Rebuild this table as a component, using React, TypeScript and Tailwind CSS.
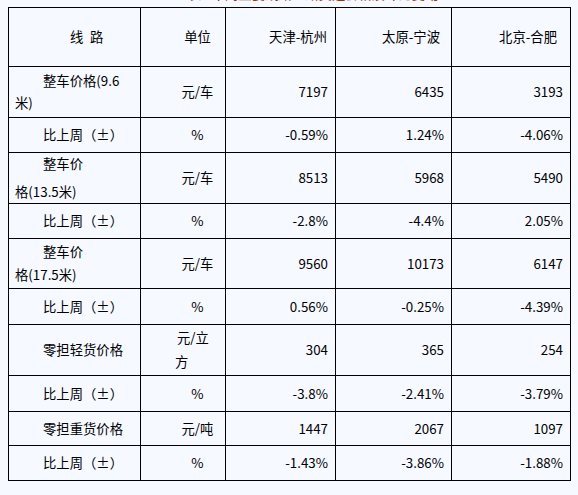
type Row = {
  label: string[];
  labelGap?: string;
  unit: string[];
  vals: string[];
  h: string;
};

const rows: Row[] = [
  { label: ["整车价格(9.6", "米)"], labelGap: "gap-[8px]", unit: ["元/车"], vals: ["7197", "6435", "3193"], h: "h-[51px]" },
  { label: ["比上周（±）"], unit: ["%"], vals: ["-0.59%", "1.24%", "-4.06%"], h: "h-[35px]" },
  { label: ["整车价", "格(13.5米)"], labelGap: "gap-[14px]", unit: ["元/车"], vals: ["8513", "5968", "5490"], h: "h-[51px]" },
  { label: ["比上周（±）"], unit: ["%"], vals: ["-2.8%", "-4.4%", "2.05%"], h: "h-[35px]" },
  { label: ["整车价", "格(17.5米)"], labelGap: "gap-[9px]", unit: ["元/车"], vals: ["9560", "10173", "6147"], h: "h-[50px]" },
  { label: ["比上周（±）"], unit: ["%"], vals: ["0.56%", "-0.25%", "-4.39%"], h: "h-[36px]" },
  { label: ["零担轻货价格"], unit: ["元/立", "方"], vals: ["304", "365", "254"], h: "h-[51px]" },
  { label: ["比上周（±）"], unit: ["%"], vals: ["-3.8%", "-2.41%", "-3.79%"], h: "h-[36px]" },
  { label: ["零担重货价格"], unit: ["元/吨"], vals: ["1447", "2067", "1097"], h: "h-[34px]" },
  { label: ["比上周（±）"], unit: ["%"], vals: ["-1.43%", "-3.86%", "-1.88%"], h: "h-[35px]" },
];

const cell = "border border-black align-middle p-0";

function Label({ lines, gap }: { lines: string[]; gap?: string }) {
  if (lines.length === 1) {
    return <div className="pl-[34px] leading-[14px] whitespace-nowrap">{lines[0]}</div>;
  }
  return (
    <div className={`flex flex-col ${gap ?? ""}`}>
      <div className="pl-[34px] leading-[14px] whitespace-nowrap">{lines[0]}</div>
      <div className="pl-[6px] leading-[14px] whitespace-nowrap">{lines[1]}</div>
    </div>
  );
}

function Unit({ lines }: { lines: string[] }) {
  if (lines.length === 1) {
    return <div className="pl-[34px] pr-[5px] text-center leading-[14px]">{lines[0]}</div>;
  }
  return (
    <div className="flex flex-col gap-[10px] pl-[34px] text-left">
      <div className="pl-[2px] leading-[14px]">{lines[0]}</div>
      <div className="leading-[14px]">{lines[1]}</div>
    </div>
  );
}

export default function App() {
  return (
    <div className="min-h-screen w-full bg-[#f6f9ff] text-black text-[13.33px] font-['Noto_Sans_CJK_SC',sans-serif]">
      {/* title row, scrolled mostly out of view */}
      <div className="h-[7px] overflow-hidden pl-[188px]">
        <div className="-mt-[13px] leading-[13px] font-medium text-[#993300] whitespace-nowrap">
          表1 本周主要线路公路货运价格及环比变动
        </div>
      </div>
      <table className="ml-[8px] w-[562px] table-fixed border-collapse">
        <colgroup>
          <col className="w-[132px]" />
          <col className="w-[85px]" />
          <col className="w-[110px]" />
          <col className="w-[116px]" />
          <col className="w-[119px]" />
        </colgroup>
        <thead>
          <tr className="h-[59px]">
            <th className={`${cell} text-left font-normal`}>
              <div className="pl-[61px] whitespace-nowrap">线{"\u2002"}路</div>
            </th>
            <th className={`${cell} font-normal`}>
              <div className="pl-[34px] pr-[5px] text-center">单位</div>
            </th>
            <th className={`${cell} text-right font-normal pr-[8px]`}>天津-杭州</th>
            <th className={`${cell} text-right font-normal pr-[11px]`}>太原-宁波</th>
            <th className={`${cell} text-right font-normal pr-[13px]`}>北京-合肥</th>
          </tr>
        </thead>
        <tbody>
          {rows.map((r, i) => (
            <tr key={i} className={r.h}>
              <td className={`${cell} text-left`}>
                <Label lines={r.label} gap={r.labelGap} />
              </td>
              <td className={cell}>
                <Unit lines={r.unit} />
              </td>
              {r.vals.map((v, j) => (
                <td key={j} className={`${cell} text-right pr-[7px] whitespace-nowrap`}>
                  {v}
                </td>
              ))}
            </tr>
          ))}
        </tbody>
      </table>
    </div>
  );
}
